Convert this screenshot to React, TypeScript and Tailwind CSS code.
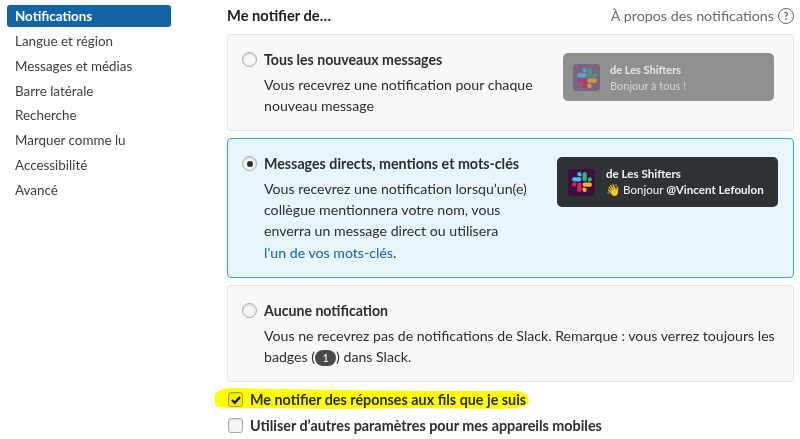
const navItems = [
  'Notifications',
  'Langue et région',
  'Messages et médias',
  'Barre latérale',
  'Recherche',
  'Marquer comme lu',
  'Accessibilité',
  'Avancé',
]

const slackParts = [
  { fill: '#E01E5A', d: 'M5.042 15.165a2.528 2.528 0 0 1-2.52 2.523A2.528 2.528 0 0 1 0 15.165a2.527 2.527 0 0 1 2.522-2.52h2.52v2.52zM6.313 15.165a2.527 2.527 0 0 1 2.521-2.52 2.527 2.527 0 0 1 2.521 2.52v6.313A2.528 2.528 0 0 1 8.834 24a2.528 2.528 0 0 1-2.521-2.522v-6.313z' },
  { fill: '#36C5F0', d: 'M8.834 5.042a2.528 2.528 0 0 1-2.521-2.52A2.528 2.528 0 0 1 8.834 0a2.528 2.528 0 0 1 2.521 2.522v2.52H8.834zM8.834 6.313a2.528 2.528 0 0 1 2.521 2.521 2.528 2.528 0 0 1-2.521 2.521H2.522A2.528 2.528 0 0 1 0 8.834a2.528 2.528 0 0 1 2.522-2.521h6.312z' },
  { fill: '#2EB67D', d: 'M18.956 8.834a2.528 2.528 0 0 1 2.522-2.521A2.528 2.528 0 0 1 24 8.834a2.528 2.528 0 0 1-2.522 2.521h-2.522V8.834zM17.688 8.834a2.528 2.528 0 0 1-2.523 2.521 2.527 2.527 0 0 1-2.52-2.521V2.522A2.527 2.527 0 0 1 15.165 0a2.528 2.528 0 0 1 2.523 2.522v6.312z' },
  { fill: '#ECB22E', d: 'M15.165 18.956a2.528 2.528 0 0 1 2.523 2.522A2.528 2.528 0 0 1 15.165 24a2.527 2.527 0 0 1-2.52-2.522v-2.522h2.52zM15.165 17.688a2.527 2.527 0 0 1-2.52-2.523 2.526 2.526 0 0 1 2.52-2.52h6.313A2.527 2.527 0 0 1 24 15.165a2.528 2.528 0 0 1-2.522 2.523h-6.313z' },
]

function SlackTile({ muted }: { muted?: boolean }) {
  return (
    <div className={`flex h-[27px] w-[27px] shrink-0 items-center justify-center rounded-[4px] ${muted ? 'bg-[#7d6480]' : 'bg-[#3f0f40]'}`}>
      <svg viewBox="0 0 24 24" className={`h-[20px] w-[20px] ${muted ? 'opacity-70' : ''}`}>
        {slackParts.map((p) => (
          <path key={p.fill} fill={p.fill} d={p.d} />
        ))}
      </svg>
    </div>
  )
}

function Radio({ checked }: { checked?: boolean }) {
  return (
    <span className="mt-[3px] flex h-[15px] w-[15px] shrink-0 items-center justify-center rounded-full border border-[#a8a8a8] bg-[#f6f6f6] shadow-[inset_0_1px_2px_rgba(0,0,0,0.15)]">
      {checked && <span className="h-[6px] w-[6px] rounded-full bg-[#2c2d30]" />}
    </span>
  )
}

function Checkbox({ checked }: { checked?: boolean }) {
  return (
    <span className="flex h-[15px] w-[15px] shrink-0 items-center justify-center rounded-[3px] border border-[#a8a8a8] bg-[#f4f4f4] shadow-[inset_0_1px_2px_rgba(0,0,0,0.1)]">
      {checked && (
        <svg viewBox="0 0 12 12" className="h-[12px] w-[12px]">
          <path d="M2 6 4.8 8.8 10 3" fill="none" stroke="#1d1c1d" strokeWidth="2.4" />
        </svg>
      )}
    </span>
  )
}

export default function App() {
  return (
    <div className="flex h-[439px] w-[800px] overflow-hidden bg-white font-['Lato','Liberation_Sans',sans-serif] text-[14.15px] leading-[21.33px] text-[#2c2d30]">
      <nav className="ml-[7px] mt-[5px] w-[164px] shrink-0">
        {navItems.map((item, i) => (
          <div
            key={item}
            className={`mb-[2.75px] flex h-[22px] items-center rounded-[3px] px-[8px] pt-[2px] text-[13.4px] ${i === 0 ? 'bg-[#1264a3] font-bold text-white' : 'text-[#3d3d40]'}`}
          >
            {item}
          </div>
        ))}
      </nav>

      <main className="ml-[56px] w-[567px] shrink-0">
        <div className="flex h-[34px] items-center justify-between pb-[2px]">
          <h2 className="text-[14.7px] font-bold text-[#1d1c1d]">Me notifier de…</h2>
          <div className="flex items-center gap-[4px] text-[14.3px] text-[#696969]">
            À propos des notifications
            <span className="flex h-[16px] w-[16px] items-center justify-center rounded-full border-[1.5px] border-[#696969] text-[11px] font-bold leading-none">?</span>
          </div>
        </div>

        <section className="flex h-[97px] gap-[7px] rounded-[4px] border border-[#e4e4e4] bg-[#f8f8f8] pl-[14px] pt-[14px]">
          <Radio />
          <div className="w-[290px] shrink-0">
            <div className="font-bold">Tous les nouveaux messages</div>
            <p className="mt-[3.5px]">Vous recevrez une notification pour chaque nouveau message</p>
          </div>
          <div className="ml-[2px] mt-[4px] flex h-[48px] w-[211px] shrink-0 items-center gap-[10px] rounded-[5px] bg-[#8f9191] pl-[10px] pt-[1px] text-[11px] leading-[16px] text-[#e6e6e6]">
            <SlackTile muted />
            <div>
              <div className="font-bold">de Les Shifters</div>
              <div className="text-[#d4d4d4]">Bonjour à tous !</div>
            </div>
          </div>
        </section>

        <section className="mt-[7px] flex h-[140px] gap-[7px] rounded-[4px] border border-[#36a8dc] bg-[#e8f5fa] pl-[14px] pt-[14px]">
          <Radio checked />
          <div className="w-[286px] shrink-0">
            <div className="text-[14.25px] font-bold">Messages directs, mentions et mots-clés</div>
            <p className="mt-[3.5px]">
              Vous recevrez une notification lorsqu’un(e) collègue mentionnera votre nom, vous enverra un message direct ou utilisera
              <br />
              <span className="text-[#1264a3]">l’un de vos mots-clés</span>.
            </p>
          </div>
          <div className="mt-[4px] flex h-[50px] w-[221px] shrink-0 items-center gap-[11px] rounded-[5px] bg-[#2e3235] pl-[11px] text-[11.6px] leading-[16px] text-[#f2f2f2]">
            <SlackTile />
            <div>
              <div className="font-bold">de Les Shifters</div>
              <div className="whitespace-nowrap">👋 Bonjour <span className="font-bold">@Vincent Lefoulon</span></div>
            </div>
          </div>
        </section>

        <section className="mt-[7px] flex h-[97px] gap-[7px] rounded-[4px] border border-[#e4e4e4] bg-[#f8f8f8] pl-[14px] pt-[14px]">
          <Radio />
          <div>
            <div className="font-bold">Aucune notification</div>
            <p className="mt-[3.5px]">
              Vous ne recevrez pas de notifications de Slack. Remarque : vous verrez toujours les badges (
              <span className="inline-block h-[16px] w-[21px] rounded-full bg-[#4a4a4d] text-center align-baseline text-[11px] leading-[16px] text-white">1</span>
              ) dans Slack.
            </p>
          </div>
        </section>

        <div className="relative mt-[9px] flex h-[17px] items-center gap-[7px] pl-[1px] text-[14.35px] font-bold">
          <Checkbox checked />
          Me notifier des réponses aux fils que je suis
          <svg viewBox="0 0 315 24" className="pointer-events-none absolute -left-[12px] -top-[4px] h-[24px] w-[315px] mix-blend-multiply">
            <path
              d="M0 7C4 3 10 1 18 1L60 2 130 3 210 4 290 4C305 4 312 5 313 9L314 16C312 20 300 22 280 22L210 21 120 22 50 21 12 21C4 20 0 19 0 16Z"
              fill="#ffff00"
            />
          </svg>
        </div>
        <div className="mt-[9px] flex h-[17px] items-center gap-[7px] pl-[1px] text-[14.35px] font-bold">
          <Checkbox />
          Utiliser d’autres paramètres pour mes appareils mobiles
        </div>
      </main>
    </div>
  )
}
